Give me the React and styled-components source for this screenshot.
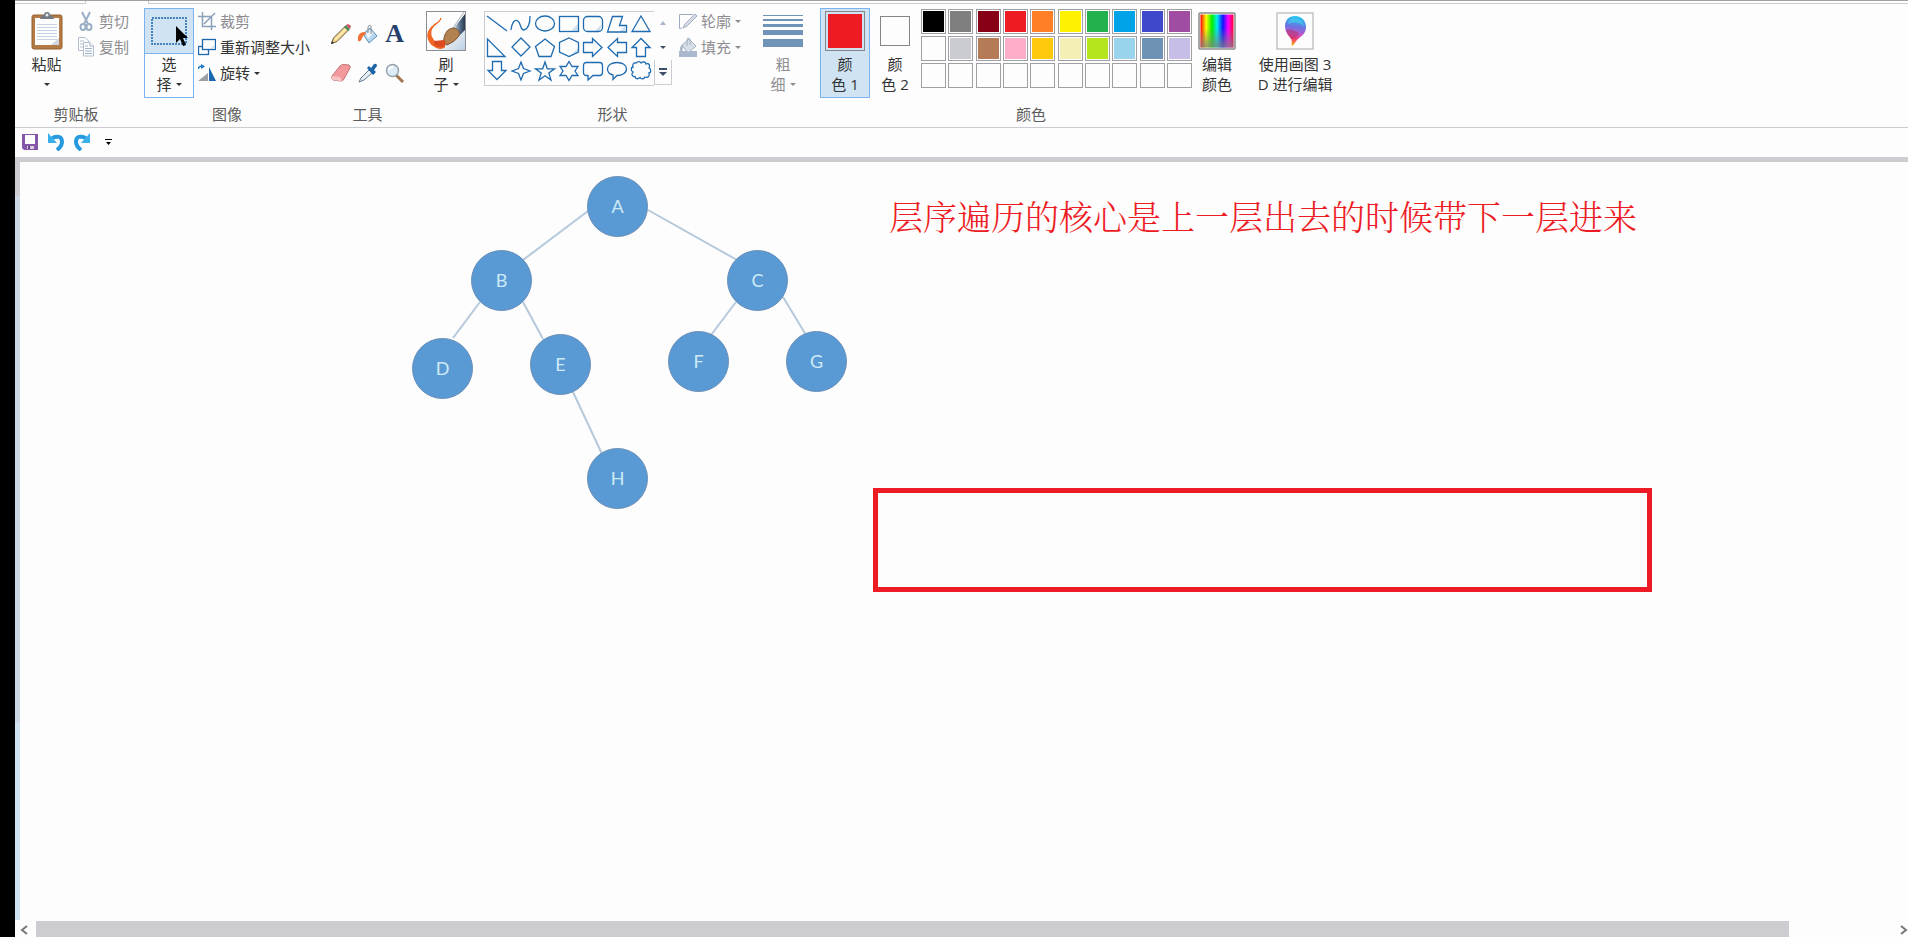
import React from "react";
import styled, { createGlobalStyle } from "styled-components";

const GlobalStyle = createGlobalStyle`
  * {
    box-sizing: border-box;
  }

  body {
    margin: 0;
    background: #fdfdfd;
    font-family: "Open Sans", "Noto Sans CJK SC", sans-serif;
    font-size: 15px;
    line-height: 20px;
    color: #333;
  }

  button {
    margin: 0;
    padding: 0;
    border: none;
    background: transparent;
    font: inherit;
    color: inherit;
  }

  svg {
    display: block;
    flex: none;
  }
`;

const Window = styled.div`
  min-height: 100vh;
  display: flex;
  flex-direction: column;
  border-left: 15px solid #000;
  overflow: hidden;
`;

const TabStrip = styled.div`
  display: flex;
  gap: 62px;
  height: 4px;
  border-top: 1px solid #a0a0a4;
`;

const TabEdge = styled.div`
  width: 71px;
  border-right: 1px solid #ccccd0;
  border-bottom: 1px solid #ccccd0;
`;

const TabRest = styled.div`
  flex: 1;
  border-left: 1px solid #ccccd0;
  border-bottom: 1px solid #ccccd0;
`;

const Ribbon = styled.header`
  display: flex;
  align-items: flex-start;
  padding: 4px 8px 3px;
  border-bottom: 1px solid #ccccd0;
`;

const Group = styled.section`
  flex: none;
  margin-left: ${props => props.$before || 0}px;
  padding-right: ${props => props.$after || 0}px;
`;

const GroupBody = styled.div`
  display: flex;
  gap: ${props => props.$gap || 0}px;
  height: 90px;
`;

const GroupLabel = styled.div`
  margin-top: 6px;
  height: 20px;
  text-align: center;
  color: #5c5c5c;
`;

const BigButton = styled.button`
  display: flex;
  flex-direction: column;
  align-items: center;
  width: ${props => props.$width || 50}px;
  height: 90px;
  border: 1px solid ${props => (props.$outlined ? "#7ab3ee" : "transparent")};
  background: ${props => (props.$active ? "#cfe3f3" : "transparent")};

  &:disabled {
    color: #8e8e92;
  }
`;

const BigIcon = styled.span`
  position: relative;
  display: flex;
  align-items: center;
  justify-content: center;
  width: 100%;
  height: 45px;
  border-bottom: 1px solid ${props => (props.$hot ? "#7ab3ee" : "transparent")};
  background: ${props => (props.$hot ? "#cfe3f3" : "transparent")};
`;

const Line = styled.span`
  display: flex;
  align-items: center;
  gap: 4px;
  height: 20px;
  white-space: pre;
`;

const Column = styled.div`
  display: flex;
  flex-direction: column;
`;

const SmallButton = styled.button`
  display: flex;
  align-items: center;
  gap: 4px;
  height: 26px;
  white-space: nowrap;

  &:disabled {
    color: #8e8e92;
  }
`;

const Caret = styled.span`
  border: 3px solid transparent;
  border-top-color: currentColor;
  border-bottom: none;
`;

const ToolGrid = styled.div`
  display: grid;
  grid-template-columns: repeat(3, 27px);
  grid-auto-rows: 39px;
  padding-top: 6px;
`;

const ToolButton = styled.button`
  display: flex;
  align-items: center;
  justify-content: center;
`;

const Gallery = styled.div`
  display: flex;
  height: 75px;
  margin: 3px 3px 0 0;
`;

const ShapeGrid = styled.div`
  display: grid;
  grid-template-columns: repeat(7, 24px);
  grid-auto-rows: 24px;
  width: 170px;
  border: 1px solid #ccccd0;
  border-right: none;
`;

const GalleryScroll = styled.div`
  display: grid;
  grid-template-rows: 24px 25px 25px;
  width: 18px;
`;

const ScrollStep = styled.button`
  display: flex;
  align-items: center;
  justify-content: center;
  border: 1px solid ${props => (props.$boxed ? "#ccccd0" : "transparent")};
  border-top: none;
`;

const CurrentColor = styled.span`
  width: ${props => props.$size}px;
  height: ${props => props.$size}px;
  border: 1px solid #86868a;
  padding: ${props => (props.$size > 30 ? 2 : 0)}px;
  background: ${props => props.$color} content-box;
`;

const Palette = styled.div`
  display: grid;
  grid-template-columns: repeat(10, 25px);
  grid-auto-rows: 25px;
  justify-content: space-between;
  row-gap: 2px;
  width: 271px;
  margin: 1px 0 0 1px;
`;

const Swatch = styled.button`
  border: 1px solid #a0a0a4;
  padding: 1px;
  background: ${props => props.$color} content-box;
`;

const QuickAccess = styled.nav`
  display: flex;
  align-items: center;
  gap: 10px;
  height: 29px;
  padding: 0 0 2px 7px;
`;

const QuickButton = styled.button`
  display: flex;
  width: 16px;
  height: 16px;
  align-items: center;
  justify-content: center;
`;

const Workspace = styled.main`
  flex: 1;
  display: flex;
  border-top: 5px solid #ccccd1;
`;

const LeftEdge = styled.div`
  width: 5px;
  background: linear-gradient(
    #cdcdd2 34px,
    #cdd8e7 34px 74%,
    #d0e3f3 74%
  );
`;

const Canvas = styled.div`
  position: relative;
  flex: 1;
`;

const Edges = styled.svg`
  position: absolute;
  left: 0;
  top: 0;
  stroke: #b5c9dc;
  stroke-width: 2;
`;

const Node = styled.div`
  position: absolute;
  left: ${props => props.$x - 30}px;
  top: ${props => props.$y - 30}px;
  width: 61px;
  height: 61px;
  border: 1px solid #6a8fb8;
  border-radius: 50%;
  background: #5a9ad4;
  color: #cdeaf6;
  font-family: Lato, sans-serif;
  font-size: 18px;
  line-height: 58px;
  text-align: center;
`;

const Note = styled.p`
  position: absolute;
  left: 869px;
  top: 34px;
  margin: 0;
  color: #ed1c24;
  font-family: "Noto Serif CJK SC", "Noto Sans CJK SC", serif;
  font-weight: 300;
  font-size: 34px;
  line-height: 40px;
  white-space: nowrap;
`;

const RedBox = styled.div`
  position: absolute;
  left: 853px;
  top: 326px;
  width: 779px;
  height: 104px;
  border: 5px solid #ed1c24;
`;

const ScrollBar = styled.div`
  display: flex;
  height: 17px;
  padding-top: 1px;
`;

const ScrollArrow = styled.button`
  display: flex;
  align-items: center;
  justify-content: ${props => (props.$end ? "flex-end" : "flex-start")};
  width: ${props => (props.$end ? 16 : 21)}px;
  padding-left: ${props => (props.$end ? 0 : 5)}px;
  padding-top: 2px;
`;

const Thumb = styled.div`
  flex: 17;
  background: #ccccd1;
`;

const Track = styled.div`
  flex: 1;
`;

const palette = [
  ["黑色", "#000000"], ["灰色-50%", "#7f7f7f"], ["深红色", "#880015"],
  ["红色", "#ed1c24"], ["橙色", "#ff7f27"], ["黄色", "#fff200"],
  ["绿色", "#22b14c"], ["青绿", "#00a2e8"], ["靛青色", "#3f48cc"],
  ["紫色", "#a04ca3"], ["白色", "#fdfdfd"], ["灰色-25%", "#cbccd1"],
  ["褐色", "#b57a56"], ["玫瑰色", "#ffaec9"], ["金色", "#ffc90e"],
  ["浅黄色", "#f4efb5"], ["酸橙色", "#b5e61d"], ["淡青绿色", "#99d4ec"],
  ["蓝灰色", "#6e91b6"], ["淡紫色", "#c8bde6"]
];

for (let i = 1; i <= 10; i++) {
  palette.push([`自定义 ${i}`, "#fdfdfd"]);
}

const nodes = [
  { name: "A", x: 597, y: 44 },
  { name: "B", x: 481, y: 118 },
  { name: "C", x: 737, y: 118 },
  { name: "D", x: 422, y: 206 },
  { name: "E", x: 540, y: 202 },
  { name: "F", x: 678, y: 199 },
  { name: "G", x: 796, y: 199 },
  { name: "H", x: 597, y: 316 }
];

const edges = [
  [568, 49, 503, 98],
  [628, 48, 717, 98],
  [460, 140, 433, 176],
  [503, 140, 523, 177],
  [716, 140, 691, 173],
  [763, 135, 786, 173],
  [553, 230, 582, 292]
];

const shapes = [
  ["直线", <path d="M2 4L22 19" />],
  ["曲线", <path d="M2 18C3 10 6 7 9 9C12 11 11 18 15 18C19 17 21 12 21 4" />],
  ["椭圆形", <ellipse cx="12" cy="11.5" rx="9.5" ry="7.5" />],
  ["矩形", <><path className="shade" d="M21 12L21 19L14 19Z" /><rect x="2.5" y="4.5" width="19" height="15" /></>],
  ["圆角矩形", <><path className="shade" d="M21 12L19 19L14 19Z" /><rect x="2.5" y="4.5" width="19" height="15" rx="4" /></>],
  ["多边形", <><path className="shade" d="M20 14V20H14Z" /><path d="M7.5 4.5H17.5L14.5 13.5H21.5V20H2.5Z" /></>],
  ["三角形", <path d="M12 4L21 19.5H3Z" />],
  ["直角三角形", <path d="M2.5 3V20.5H20Z" />],
  ["菱形", <path d="M12 2L21 11L12 20L3 11Z" />],
  ["五边形", <path d="M12 3L21.5 10.5L18 20.5H6L2.5 10.5Z" />],
  ["六边形", <><path className="shade" d="M21 12V16L13 20Z" /><path d="M12 2L21.5 6.5V16L12 20.5L2.5 16V6.5Z" /></>],
  ["右箭头", <path d="M2.5 6.5H11.5V2.5L21 11.5L11.5 20.5V16.5H2.5Z" />],
  ["左箭头", <path d="M21.5 6.5H12.5V2.5L3 11.5L12.5 20.5V16.5H21.5Z" />],
  ["向上箭头", <path d="M7.5 20.5V11.5H3L12 2.5L21 11.5H16.5V20.5Z" />],
  ["向下箭头", <path d="M7.5 1.5V10.5H3L12 19.5L21 10.5H16.5V1.5Z" />],
  ["四角星形", <path d="M12 2L14.5 8.5L21 11L14.5 13.5L12 20L9.5 13.5L3 11L9.5 8.5Z" />],
  ["五角星形", <path d="M12 2L14.3 8.8L21.5 8.8L15.8 13L18 20L12 15.7L6 20L8.2 13L2.5 8.8L9.7 8.8Z" />],
  ["六角星形", <path d="M12 1.5L15 6.5H21L18 11L21 15.5H15L12 20.5L9 15.5H3L6 11L3 6.5H9Z" />],
  ["圆角矩形标注", <path d="M5.5 2.5H18.5Q21.5 2.5 21.5 5.5V12.5Q21.5 15.5 18.5 15.5H12L7 20V15.5H5.5Q2.5 15.5 2.5 12.5V5.5Q2.5 2.5 5.5 2.5Z" />],
  ["椭圆形标注", <path d="M8 19.5V15C4 14 2.5 11.5 2.5 9C2.5 5 6.5 2.5 12 2.5S21.5 5 21.5 9S17 15.5 12 15.5Z" />],
  ["云形标注", <path d="M7 3C9 1 11 1.5 12 3C14 1 17 2 17 4C20 3 21.5 5 20 8C22.5 9 22 13 20 13C21 16 19 18 16 17C15 19.5 12 19.5 11 17.5C9 19.5 6 19 6 16.5C3 17 2 14 4 12C1.5 11 2 7 4 7C3 4 5 2.5 7 3Z" />]
];

const ShapeSvg = styled.svg`
  fill: none;
  stroke: #1e6bb0;
  stroke-width: 1.3;

  .shade {
    fill: #cfe1f1;
    stroke: none;
  }
`;

const PasteIcon = () => (
  <svg width="32" height="38" viewBox="0 0 32 38">
    <rect x="1" y="3" width="30" height="34" rx="2" fill="#b37a45" stroke="#94602f" />
    <rect x="4" y="6" width="24" height="27" fill="#fdfdfd" />
    <path d="M6 12.5H26M6 15.5H26M6 18.5H26M6 21.5H26M6 24.5H26M6 27.5H26" stroke="#c6d2e2" />
    <path d="M20 33L28 26V33Z" fill="#cdd6e2" />
    <path d="M9 7Q10 3 13 3Q13 0 16 0T19 3Q22 3 23 7Z" fill="#747a83" />
    <circle cx="16" cy="3" r="1.5" fill="#e8ecf0" />
  </svg>
);

const CutIcon = () => (
  <svg width="18" height="20" viewBox="0 0 18 20" fill="none" stroke="#9aaec5" strokeWidth="2">
    <path d="M5 1L11 13M13 1L7 13" />
    <ellipse cx="6" cy="16" rx="2.5" ry="3" />
    <ellipse cx="12" cy="16" rx="2.5" ry="3" />
  </svg>
);

const CopyIcon = () => (
  <svg width="18" height="20" viewBox="0 0 18 20" fill="#fdfdfd" stroke="#b3bfd0">
    <path d="M1.5 .5H8L11.5 4V13.5H1.5Z" />
    <path d="M3 4H7M3 7H9M3 10H9" />
    <path d="M6.5 5.5H13L16.5 9V19H6.5Z" />
    <path d="M13 5.5V9H16.5M8 9H11M8 11.5H15M8 14H15M8 16.5H15" stroke="#9eb3cc" />
  </svg>
);

const SelectIcon = () => (
  <svg width="36" height="28" viewBox="0 0 36 28">
    <rect x="1" y="1" width="34" height="26" fill="none" stroke="#1b66ad" strokeWidth="1.5" strokeDasharray="2 1" />
  </svg>
);

const Pointer = styled.svg`
  position: absolute;
  left: 30px;
  top: 16px;
`;

const CropIcon = () => (
  <svg width="18" height="18" viewBox="0 0 18 18" fill="none" stroke="#8ba1bb" strokeWidth="1.5">
    <path d="M0 4.5H13.5V18M4.5 0V14.5H18M6 12L17 1" />
  </svg>
);

const ResizeIcon = () => (
  <svg width="18" height="18" viewBox="0 0 18 18" fill="#fdfdfd" stroke="#1b66ad" strokeWidth="1.3">
    <rect x=".5" y="8.5" width="10" height="8" />
    <rect x="4.5" y="1.5" width="13" height="10" />
    <path d="M17 6V11H12Z" fill="#cfe1f1" stroke="none" />
  </svg>
);

const RotateIcon = () => (
  <svg width="18" height="18" viewBox="0 0 18 18">
    <path d="M0 17L10 9V17Z" fill="#9c9fa4" />
    <path d="M11 17V3L18 17Z" fill="#1b66ad" />
    <path d="M0 5Q1 2 4 2" fill="none" stroke="#1b79cc" strokeWidth="1.5" />
    <path d="M3 0L7 2.5L3 5Z" fill="#1b79cc" />
  </svg>
);

const PencilIcon = () => (
  <svg width="20" height="20" viewBox="0 0 20 20">
    <path d="M.5 19.500L2.500 14L14 2.500L17.500 6L6 17.500Z" fill="#f6d58a" stroke="#66583e" />
    <path d="M4 16L16 4" stroke="#fff0bd" strokeWidth="1.5" />
    <path d="M13 3L15 1L19 5L17 7Z" fill="#4b8a5b" />
    <path d="M15 1L17 0L20 2L19 5Z" fill="#d34c5d" />
    <path d="M0 20L1 17L3 19Z" fill="#333" />
  </svg>
);

const BucketIcon = () => (
  <svg width="20" height="20" viewBox="0 0 20 20">
    <path d="M5 10L12 4L19 12L11 19Z" fill="#b8d8ef" stroke="#5f8eb7" />
    <path d="M8 10L12 6L15 9L10 15Z" fill="#edf6fc" />
    <path d="M10 9V3Q11 0 13 2V10" fill="none" stroke="#8a8d90" />
    <path d="M7 8Q1 8 0 13V17Q3 18 4 14Q5 11 8 10Z" fill="#ee7034" />
  </svg>
);

const TextGlyph = styled.span`
  font-family: "Liberation Serif", serif;
  font-size: 26px;
  font-weight: bold;
  color: #26406b;
`;

const EraserIcon = () => (
  <svg width="20" height="18" viewBox="0 0 20 18" stroke="#c17478">
    <path d="M9 2Q10 1 12 .5L18 1Q20 2 19 4L13 15Q12 17 10 17L2 16Q0 15 1 12Z" fill="#f3999b" />
    <path d="M1 12L9 13L11 17H10L2 16Q0 15 1 12Z" fill="#f9c3c4" stroke="none" />
  </svg>
);

const PickerIcon = () => (
  <svg width="20" height="20" viewBox="0 0 20 20">
    <path d="M1 19L3 15L11 7L14 10L6 17Z" fill="#e7eef5" stroke="#66788c" />
    <path d="M9 5L11 3L13 5L16 1Q19 0 19 3L16 7L18 9L15 12Z" fill="#1c66a8" />
  </svg>
);

const ZoomIcon = () => (
  <svg width="20" height="20" viewBox="0 0 20 20">
    <path d="M11 12L18 19" stroke="#a2754f" strokeWidth="3" />
    <circle cx="7.5" cy="7.5" r="6" fill="#dcedf8" stroke="#96a2ad" strokeWidth="1.5" />
    <path d="M4 7Q4 4 8 4" fill="none" stroke="#fff" strokeWidth="2" />
  </svg>
);

const BrushIcon = () => (
  <svg width="40" height="40" viewBox="0 0 40 40">
    <defs>
      <linearGradient id="brushBack" x1="0" y1="0" x2="1" y2="1">
        <stop offset=".5" stopColor="#fdfdfd" />
        <stop offset="1" stopColor="#b8cce0" />
      </linearGradient>
      <linearGradient id="handle">
        <stop offset="0" stopColor="#d5dde5" />
        <stop offset=".5" stopColor="#5d7590" />
        <stop offset="1" stopColor="#26384f" />
      </linearGradient>
    </defs>
    <path d="M0 0H40V40H0Z" fill="url(#brushBack)" />
    <path d="M15 7Q15 10 9 14C3 19 3 27 12 33L19 36Q13 40 5 33C-1 25 2 18 9 13Q13 11 14 9Z" fill="#f26522" stroke="#f26522" />
    <path d="M28 17L39 3V19L34 24Z" fill="url(#handle)" />
    <path d="M27 17L38 1" stroke="#a5b0bb" />
    <path d="M18 27Q20 17 28 17Q35 19 33 25Q29 31 21 34Q17 32 18 27Z" fill="#b28250" stroke="#7d5533" />
    <path d="M8 30L18 29Q21 31 19 35Q14 38 8 34Z" fill="#dc4a20" />
    <rect x=".5" y=".5" width="39" height="39" fill="none" stroke="#8e8e92" />
  </svg>
);

const OutlineIcon = () => (
  <svg width="18" height="18" viewBox="0 0 18 18" fill="none" stroke="#9eabc0">
    <path d="M14 2.5H.5V16.5L3 16" />
    <path d="M4 16L6 12L16 2L18 4L8 14Z" fill="#d6dde6" />
  </svg>
);

const FillIcon = () => (
  <svg width="18" height="20" viewBox="0 0 18 20">
    <rect y="14" width="18" height="6" fill="#a9b8cd" />
    <path d="M3 8L10 2L17 9L9 16Z" fill="#d7e0e9" stroke="#a0b1c5" />
    <path d="M8 9V2Q9 0 11 2V8" fill="none" stroke="#a0b1c5" />
    <path d="M4 7Q0 9 1 15Q4 15 4 10Z" fill="#aab8c8" />
  </svg>
);

const ThicknessIcon = () => (
  <svg width="40" height="34" viewBox="0 0 40 34" fill="#7093b8">
    <rect y="1" width="40" height="1" />
    <rect y="5" width="40" height="2" />
    <rect y="10" width="40" height="3" />
    <rect y="16" width="40" height="5" />
    <rect y="25" width="40" height="8" />
  </svg>
);

const SpectrumIcon = () => (
  <svg width="38" height="38" viewBox="0 0 38 38">
    <defs>
      <linearGradient id="hues">
        <stop offset="0" stopColor="#f00" />
        <stop offset=".17" stopColor="#ff0" />
        <stop offset=".35" stopColor="#0e0" />
        <stop offset=".5" stopColor="#0ee" />
        <stop offset=".68" stopColor="#11f" />
        <stop offset=".84" stopColor="#f0f" />
        <stop offset="1" stopColor="#f03" />
      </linearGradient>
      <linearGradient id="fade" x1="0" y1="0" x2="0" y2="1">
        <stop offset=".4" stopColor="#808080" stopOpacity="0" />
        <stop offset="1" stopColor="#808080" stopOpacity=".8" />
      </linearGradient>
    </defs>
    <rect x="1" y="1" width="36" height="36" rx="1" fill="#fdfdfd" stroke="#8a8a8e" strokeWidth="1.5" />
    <rect x="2.5" y="2.5" width="33" height="33" fill="url(#hues)" />
    <rect x="2.5" y="2.5" width="33" height="33" fill="url(#fade)" />
  </svg>
);

const Paint3DIcon = () => (
  <svg width="38" height="38" viewBox="0 0 38 38">
    <defs>
      <linearGradient id="drop" x1=".5" y1="0" x2=".4" y2="1">
        <stop offset="0" stopColor="#22c6ee" />
        <stop offset=".35" stopColor="#6b74e4" />
        <stop offset=".6" stopColor="#c055c8" />
        <stop offset=".75" stopColor="#ee3b76" />
        <stop offset="1" stopColor="#ffb000" />
      </linearGradient>
    </defs>
    <rect x="1" y="1" width="36" height="36" fill="#fdfdfd" stroke="#a8a8ac" />
    <path d="M19 4C26 4 30 9 30 15C30 22 25 24 21 28C19 30 18 33 16 34C15 32 17 29 14 25C11 22 9 19 9 14C9 8 13 4 19 4Z" fill="url(#drop)" />
    <path d="M10 18Q17 16 23 22Q19 27 15 27Q11 23 10 18Z" fill="#b82b62" opacity=".5" />
    <path d="M17 6Q28 7 28 15Q22 8 12 12Q13 7 17 6Z" fill="#44d2f0" opacity=".6" />
  </svg>
);

const SaveIcon = () => (
  <svg width="16" height="16" viewBox="0 0 16 16">
    <path d="M0 0H16V16H2L0 14Z" fill="#8557a8" />
    <rect x="3" y="1" width="10" height="9" fill="#fdfdfd" />
    <rect x="5" y="12" width="7" height="3" fill="#d8d2df" />
    <rect x="6" y="12" width="2" height="3" fill="#6b438e" />
  </svg>
);

const UndoIcon = ({ flip }) => (
  <svg width="16" height="18" viewBox="0 0 16 18">
    <g transform={flip ? "translate(16 0) scale(-1 1)" : undefined}>
      <path d="M4 5Q14 1 14 9Q14 13 9 17" fill="none" stroke="#2799df" strokeWidth="4" />
      <path d="M0 0V10H9Z" fill="#38aeea" />
    </g>
  </svg>
);

const App = () => (
  <>
    <GlobalStyle />
    <Window>
      <TabStrip>
        <TabEdge />
        <TabRest />
      </TabStrip>
      <Ribbon>
        <Group $after={10}>
          <GroupBody $gap={7}>
            <BigButton $width={47}>
              <BigIcon><PasteIcon /></BigIcon>
              <Line>粘贴</Line>
              <Line><Caret /></Line>
            </BigButton>
            <Column>
              <SmallButton disabled><CutIcon />剪切</SmallButton>
              <SmallButton disabled><CopyIcon />复制</SmallButton>
            </Column>
          </GroupBody>
          <GroupLabel>剪贴板</GroupLabel>
        </Group>

        <Group $before={5} $after={7}>
          <GroupBody $gap={4}>
            <BigButton $outlined>
              <BigIcon $hot>
                <SelectIcon />
                <Pointer width="14" height="24" viewBox="0 0 14 24">
                  <path d="M1 1V18L5 14L8 21L11 20L8 13H13Z" />
                </Pointer>
              </BigIcon>
              <Line>选</Line>
              <Line>择<Caret /></Line>
            </BigButton>
            <Column>
              <SmallButton disabled><CropIcon />裁剪</SmallButton>
              <SmallButton><ResizeIcon />重新调整大小</SmallButton>
              <SmallButton><RotateIcon />旋转<Caret /></SmallButton>
            </Column>
          </GroupBody>
          <GroupLabel>图像</GroupLabel>
        </Group>

        <Group $before={10}>
          <GroupBody>
            <ToolGrid>
              <ToolButton aria-label="铅笔"><PencilIcon /></ToolButton>
              <ToolButton aria-label="用颜色填充"><BucketIcon /></ToolButton>
              <ToolButton aria-label="文本"><TextGlyph>A</TextGlyph></ToolButton>
              <ToolButton aria-label="橡皮擦"><EraserIcon /></ToolButton>
              <ToolButton aria-label="颜色选取器"><PickerIcon /></ToolButton>
              <ToolButton aria-label="放大镜"><ZoomIcon /></ToolButton>
            </ToolGrid>
          </GroupBody>
          <GroupLabel>工具</GroupLabel>
        </Group>

        <Group $before={15}>
          <BigButton $width={46}>
            <BigIcon><BrushIcon /></BigIcon>
            <Line>刷</Line>
            <Line>子<Caret /></Line>
          </BigButton>
        </Group>

        <Group $before={15} $after={2}>
          <GroupBody $gap={4}>
            <Gallery>
              <ShapeGrid>
                {shapes.map(([name, drawing]) => (
                  <ToolButton key={name} aria-label={name}>
                    <ShapeSvg width="24" height="24" viewBox="0 0 24 24">
                      {drawing}
                    </ShapeSvg>
                  </ToolButton>
                ))}
              </ShapeGrid>
              <GalleryScroll>
                <ScrollStep aria-label="上一行">
                  <svg width="6" height="4"><path d="M0 4L3 0L6 4Z" fill="#a9b5cb" /></svg>
                </ScrollStep>
                <ScrollStep aria-label="下一行">
                  <svg width="6" height="3"><path d="M0 0H6L3 3Z" fill="#3c4f66" /></svg>
                </ScrollStep>
                <ScrollStep $boxed aria-label="更多形状">
                  <svg width="8" height="8"><path d="M0 0H8V2H0ZM0 4H8L4 8Z" fill="#3c4f66" /></svg>
                </ScrollStep>
              </GalleryScroll>
            </Gallery>
            <Column>
              <SmallButton disabled><OutlineIcon />轮廓<Caret /></SmallButton>
              <SmallButton disabled><FillIcon />填充<Caret /></SmallButton>
            </Column>
          </GroupBody>
          <GroupLabel>形状</GroupLabel>
        </Group>

        <Group $before={19}>
          <BigButton $width={42} disabled>
            <BigIcon><ThicknessIcon /></BigIcon>
            <Line>粗</Line>
            <Line>细<Caret /></Line>
          </BigButton>
        </Group>

        <Group $before={16}>
          <GroupBody>
            <BigButton $outlined $active>
              <BigIcon><CurrentColor $size={40} $color="#ed1c24" /></BigIcon>
              <Line>颜</Line>
              <Line>色 1</Line>
            </BigButton>
            <BigButton>
              <BigIcon><CurrentColor $size={30} $color="#fdfdfd" /></BigIcon>
              <Line>颜</Line>
              <Line>色 2</Line>
            </BigButton>
            <Palette>
              {palette.map(([name, color]) => (
                <Swatch key={name} $color={color} aria-label={name} />
              ))}
            </Palette>
            <BigButton>
              <BigIcon><SpectrumIcon /></BigIcon>
              <Line>编辑</Line>
              <Line>颜色</Line>
            </BigButton>
          </GroupBody>
          <GroupLabel>颜色</GroupLabel>
        </Group>

        <Group $before={10}>
          <BigButton $width={86}>
            <BigIcon><Paint3DIcon /></BigIcon>
            <Line>使用画图 3</Line>
            <Line>D 进行编辑</Line>
          </BigButton>
        </Group>
      </Ribbon>

      <QuickAccess>
        <QuickButton aria-label="保存"><SaveIcon /></QuickButton>
        <QuickButton aria-label="撤消"><UndoIcon /></QuickButton>
        <QuickButton aria-label="重做"><UndoIcon flip /></QuickButton>
        <QuickButton aria-label="自定义快速访问工具栏">
          <svg width="7" height="6"><path d="M0 0H7V1H0ZM1 3H6L3.5 6Z" /></svg>
        </QuickButton>
      </QuickAccess>

      <Workspace>
        <LeftEdge />
        <Canvas>
          <Edges width="860" height="360">
            {edges.map(([x1, y1, x2, y2]) => (
              <line key={`${x1}-${y1}`} x1={x1} y1={y1} x2={x2} y2={y2} />
            ))}
          </Edges>
          {nodes.map(node => (
            <Node key={node.name} $x={node.x} $y={node.y}>
              {node.name}
            </Node>
          ))}
          <Note>层序遍历的核心是上一层出去的时候带下一层进来</Note>
          <RedBox />
        </Canvas>
      </Workspace>

      <ScrollBar>
        <ScrollArrow aria-label="向左滚动">
          <svg width="8" height="10" fill="none" stroke="#77777b" strokeWidth="2"><path d="M7 1L2 5L7 9" /></svg>
        </ScrollArrow>
        <Thumb />
        <Track />
        <ScrollArrow $end aria-label="向右滚动">
          <svg width="8" height="10" fill="none" stroke="#77777b" strokeWidth="2"><path d="M1 1L6 5L1 9" /></svg>
        </ScrollArrow>
      </ScrollBar>
    </Window>
  </>
);

export default App;
